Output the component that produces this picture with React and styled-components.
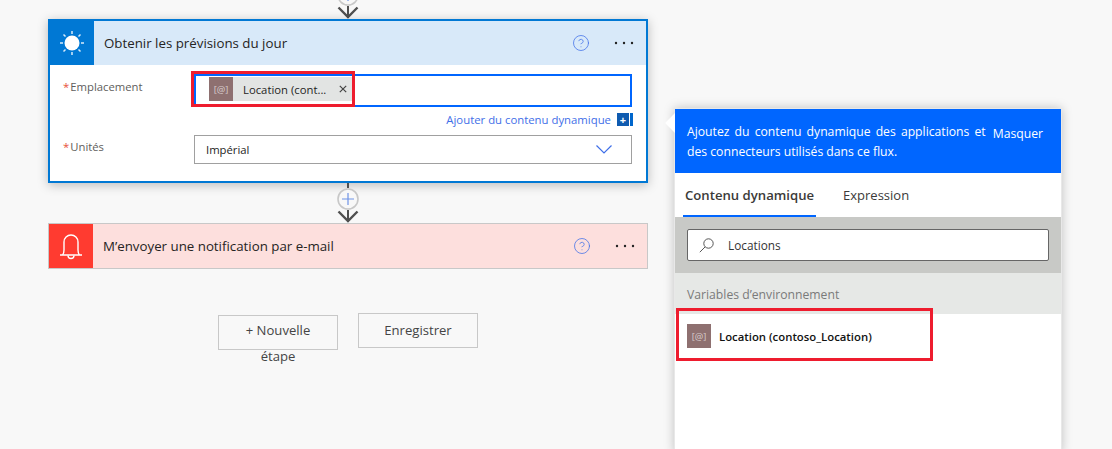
import React from 'react'
import styled, { createGlobalStyle } from 'styled-components'
import { CircleHelp } from 'lucide-react'

const BLUE = '#0066ff'
const LINK = '#3f6fe8'
const RED = '#ee1c2e'

export default function App() {
  return (
    <Page>
      <GlobalStyle />
      <Canvas>
        <TopStub viewBox="0 21 24 19" width="24" height="19">
          <ConnectorShape />
        </TopStub>

        <ActiveCard>
          <CardHeader $bg="#d8e9f9">
            <IconBlock $bg="#0078d4" $width={44}>
              <SunIcon />
            </IconBlock>
            <CardTitle>Obtenir les prévisions du jour</CardTitle>
            <CardActions>
              <CircleHelp size={18} strokeWidth={1} color={LINK} />
              <DotsIcon />
            </CardActions>
          </CardHeader>
          <CardBody>
            <FieldRow>
              <FieldLabel><Star>*</Star>Emplacement</FieldLabel>
              <TokenInput>
                <Token>
                  <VarIcon>[@]</VarIcon>
                  <TokenText>Location (cont...</TokenText>
                  <CloseIcon />
                </Token>
                <InputHighlight />
              </TokenInput>
            </FieldRow>
            <LinkRow>
              <DynamicLink>Ajouter du contenu dynamique</DynamicLink>
              <PlusBox><PlusGlyph>+</PlusGlyph></PlusBox>
            </LinkRow>
            <FieldRow>
              <FieldLabel $top={4}><Star>*</Star>Unités</FieldLabel>
              <SelectBox>
                <span>Impérial</span>
                <ChevronIcon />
              </SelectBox>
            </FieldRow>
          </CardBody>
        </ActiveCard>

        <Connector viewBox="0 0 24 40" width="24" height="40">
          <ConnectorShape />
        </Connector>

        <AlertCard>
          <CardHeader $bg="#fddfdd">
            <IconBlock $bg="#ff3b30" $width={44}>
              <BellIcon />
            </IconBlock>
            <CardTitle>M’envoyer une notification par e-mail</CardTitle>
            <CardActions>
              <CircleHelp size={18} strokeWidth={1} color={LINK} />
              <DotsIcon />
            </CardActions>
          </CardHeader>
        </AlertCard>

        <ButtonRow>
          <StepButton $top={1}>+ Nouvelle étape</StepButton>
          <StepButton $top={3}>Enregistrer</StepButton>
        </ButtonRow>
      </Canvas>

      <Panel>
        <PanelTip />
        <PanelHeader>
          <PanelIntro>Ajoutez du contenu dynamique des applications et des connecteurs utilisés dans ce flux.</PanelIntro>
          <HideLink>Masquer</HideLink>
        </PanelHeader>
        <Tabs>
          <Tab $active>Contenu dynamique</Tab>
          <Tab>Expression</Tab>
        </Tabs>
        <SearchBand>
          <SearchBox>
            <SearchIcon />
            <span>Locations</span>
          </SearchBox>
        </SearchBand>
        <SectionTitle>Variables d’environnement</SectionTitle>
        <ResultRow>
          <VarIcon>[@]</VarIcon>
          <ResultName>Location (contoso_Location)</ResultName>
          <RowHighlight />
        </ResultRow>
      </Panel>
    </Page>
  )
}

// drawings
function ConnectorShape() {
  return (
    <g fill="none">
      <path d="M12 0v5M12 27v12" stroke="#505050" strokeWidth="2" />
      <circle cx="12" cy="16" r="10" fill="#f8f8f8" stroke="#c8c8c8" strokeWidth="1.6" />
      <path d="M12 10v12M6 16h12" stroke="#6f93e6" strokeWidth="1.2" />
      <path d="M2.5 28.5l9.5 9.5 9.5-9.5" stroke="#505050" strokeWidth="2.4" />
    </g>
  )
}

function SunIcon() {
  return (
    <svg width="26" height="26" viewBox="0 0 26 26" fill="none" stroke="#fff">
      <circle cx="13" cy="13" r="7.5" fill="#fff" strokeWidth="0" />
      <path d="M13 1v3M13 22v3M1 13h3M22 13h3M4.5 4.5l2 2M19.5 19.5l2 2M21.5 4.5l-2 2M6.500 19.500l-2 2" strokeWidth="1.5" opacity=".85" />
    </svg>
  )
}

function BellIcon() {
  return (
    <svg width="24" height="28" viewBox="0 0 24 28" fill="none" stroke="#fff" strokeWidth="1.4">
      <path d="M1 23h22M3.500 23c1-1 1.500-2.500 1.500-5V10a7 7 0 0 1 14 0v8c0 2.500.5 4 1.500 5" />
      <path d="M9 23.500a3 3 0 0 0 6 0" />
    </svg>
  )
}

function DotsIcon() {
  return (
    <svg width="20" height="4" viewBox="0 0 20 4" fill="#222">
      <circle cx="2" cy="2" r="1.200" />
      <circle cx="10" cy="2" r="1.200" />
      <circle cx="18" cy="2" r="1.200" />
    </svg>
  )
}

function CloseIcon() {
  return (
    <CloseSvg width="8" height="8" viewBox="0 0 8 8" stroke="#444" strokeWidth="1.200">
      <path d="M.8.8l6.400 6.400M7.200.8L.8 7.200" />
    </CloseSvg>
  )
}

function ChevronIcon() {
  return (
    <svg width="16" height="9" viewBox="0 0 16 9" fill="none" stroke={LINK} strokeWidth="1.200">
      <path d="M.5.5L8 8 15.500.5" />
    </svg>
  )
}

function SearchIcon() {
  return (
    <svg width="15" height="15" viewBox="0 0 15 15" fill="none" stroke="#444" strokeWidth=".9">
      <circle cx="9.500" cy="5.500" r="4.700" />
      <path d="M6 9L.8 14.200" />
    </svg>
  )
}

const GlobalStyle = createGlobalStyle`
  html, body {
    margin: 0;
    padding: 0;
    background: #f8f8f8;
  }
  body {
    font-family: "Open Sans", "Noto Sans", sans-serif;
    color: #333;
  }
`

const Page = styled.div`
  display: flex;
  align-items: flex-start;
  width: 1112px;
  height: 449px;
  padding-left: 48px;
  box-sizing: border-box;
  overflow: hidden;
  background: #f8f8f8;
`

const Canvas = styled.div`
  display: flex;
  flex-direction: column;
  width: 600px;
  flex: none;
`

const TopStub = styled.svg`
  display: block;
  align-self: center;
`

const Connector = styled.svg`
  display: block;
  align-self: center;
`

const ActiveCard = styled.section`
  border: 2px solid #0078d4;
  background: #fff;
  box-shadow: 0 2px 10px rgba(0, 0, 0, 0.25);
`

const AlertCard = styled.section`
  border: 1px solid #c8c8c8;
`

const CardHeader = styled.header`
  display: flex;
  align-items: center;
  height: 44px;
  background: ${p => p.$bg};
`

const IconBlock = styled.div`
  display: flex;
  align-items: center;
  justify-content: center;
  flex: none;
  width: ${p => p.$width}px;
  height: 100%;
  background: ${p => p.$bg};
`

const CardTitle = styled.h2`
  flex: 1;
  margin: 0 0 0 10px;
  font-size: 13.300px;
  font-weight: 400;
  color: #252423;
`

const CardActions = styled.div`
  display: flex;
  align-items: center;
  gap: 24px;
  padding-right: 12px;
`

const CardBody = styled.div`
  display: flex;
  flex-direction: column;
  padding: 9px 14px 17px 13px;
`

const FieldRow = styled.div`
  display: flex;
  align-items: flex-start;
`

const FieldLabel = styled.label`
  flex: none;
  width: 131px;
  padding-top: ${p => p.$top ?? 5}px;
  font-size: 11.300px;
  color: #605e5c;
`

const Star = styled.span`
  color: #e8503a;
  margin-right: 1px;
`

const TokenInput = styled.div`
  position: relative;
  flex: 1;
  height: 33px;
  box-sizing: border-box;
  padding: 1px 0 0 13px;
  border: 2px solid ${BLUE};
  background: #fff;
`

const InputHighlight = styled.div`
  position: absolute;
  left: -5px;
  top: -5px;
  width: 164px;
  height: 36px;
  box-sizing: border-box;
  border: 3px solid ${RED};
  pointer-events: none;
`

const Token = styled.div`
  display: flex;
  align-items: center;
  width: 143px;
  height: 24px;
  background: #e2e4e3;
`

const VarIcon = styled.div`
  display: flex;
  align-items: center;
  justify-content: center;
  flex: none;
  width: 24px;
  height: 24px;
  background: #8e7070;
  color: #d8cccc;
  font-size: 9.500px;
`

const TokenText = styled.span`
  flex: 1;
  margin-left: 10px;
  font-size: 11.300px;
  color: #252423;
`

const CloseSvg = styled.svg`
  margin-right: 5px;
`

const LinkRow = styled.div`
  display: flex;
  align-items: center;
  justify-content: flex-end;
  gap: 6px;
  height: 14px;
  margin: 5px -1px 9px 0;
`

const DynamicLink = styled.a`
  font-size: 11.350px;
  color: ${LINK};
`

const PlusBox = styled.div`
  display: flex;
  align-items: center;
  justify-content: center;
  width: 16px;
  height: 13px;
  box-sizing: border-box;
  padding-right: 4px;
  background: linear-gradient(to right, #0f5bb0 0 12px, #fff 12px 13px, #0066cc 13px);
`

const PlusGlyph = styled.span`
  color: #fff;
  font-size: 11px;
  font-weight: 700;
  line-height: 13px;
`

const SelectBox = styled.div`
  display: flex;
  align-items: center;
  justify-content: space-between;
  flex: 1;
  height: 29px;
  box-sizing: border-box;
  padding: 0 19px 0 11px;
  border: 1px solid #a0a0a0;
  font-size: 11.300px;
  color: #252423;
`

const ButtonRow = styled.div`
  display: flex;
  align-items: baseline;
  gap: 20px;
  margin: 44px 0 0 170px;
`

const StepButton = styled.div`
  width: 120px;
  height: 35px;
  box-sizing: border-box;
  padding: ${p => p.$top}px 24px 0;
  border: 1px solid #c8c8c8;
  font-size: 13.100px;
  line-height: 26px;
  text-align: center;
  color: #444;
`

const Panel = styled.aside`
  position: relative;
  flex: none;
  width: 388px;
  height: 345px;
  margin: 108px 0 0 26px;
  box-sizing: border-box;
  border: 1px solid #e8e8e8;
  border-bottom: 0;
  background: #fff;
  box-shadow: 0 0 10px rgba(0, 0, 0, 0.22);
`

const PanelTip = styled.div`
  position: absolute;
  left: -7px;
  top: 7px;
  width: 14px;
  height: 14px;
  background: #fff;
  transform: rotate(45deg);
`

const PanelHeader = styled.div`
  position: relative;
  display: flex;
  align-items: flex-start;
  height: 64px;
  box-sizing: border-box;
  padding: 13px 18px 0 12px;
  background: ${BLUE};
  color: #fff;
  font-size: 12.200px;
`

const PanelIntro = styled.div`
  width: 300px;
  margin-right: 7px;
  line-height: 20px;
  text-align: justify;
`

const HideLink = styled.span`
  margin-top: 2px;
  line-height: 20px;
`

const Tabs = styled.div`
  display: flex;
  gap: 25px;
  height: 44px;
  padding-left: 8px;
`

const Tab = styled.div`
  display: flex;
  align-items: center;
  height: 44px;
  box-sizing: border-box;
  padding: 1px 2px 0;
  border-bottom: 2px solid ${p => (p.$active ? BLUE : 'transparent')};
  font-size: ${p => (p.$active ? 13.15 : 13)}px;
  font-weight: ${p => (p.$active ? 600 : 400)};
  color: #3b3a39;
`

const SearchBand = styled.div`
  height: 56px;
  box-sizing: border-box;
  padding: 12px 12px 0;
  background: #c8c9c6;
`

const SearchBox = styled.div`
  display: flex;
  align-items: center;
  gap: 14px;
  height: 32px;
  box-sizing: border-box;
  padding-left: 11px;
  border: 1px solid #666;
  border-radius: 2px;
  background: #fff;
  font-size: 11.800px;
  color: #333;
`

const SectionTitle = styled.div`
  display: flex;
  align-items: center;
  height: 41px;
  box-sizing: border-box;
  padding: 1px 0 0 12px;
  background: #e6e8e6;
  font-size: 12.200px;
  color: #7a7a7a;
`

const ResultRow = styled.div`
  position: relative;
  display: flex;
  align-items: center;
  gap: 8px;
  height: 47px;
  box-sizing: border-box;
  padding: 10px 0 13px 12px;
`

const ResultName = styled.span`
  font-size: 11.350px;
  font-weight: 600;
  color: #111;
`

const RowHighlight = styled.div`
  position: absolute;
  left: 1px;
  top: -6px;
  width: 257px;
  height: 53px;
  box-sizing: border-box;
  border: 3px solid ${RED};
  pointer-events: none;
`
